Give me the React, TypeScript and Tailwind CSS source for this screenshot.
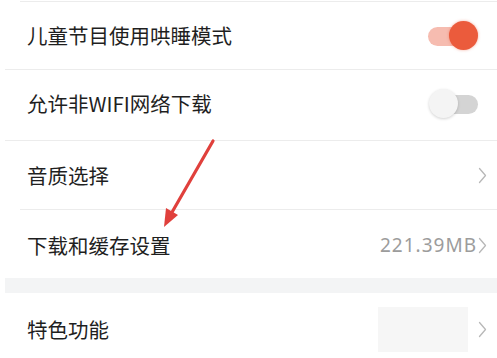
import { ReactNode } from 'react';

const FONT = { fontFamily: '"Noto Sans CJK SC", "Noto Sans", sans-serif' };

function Chevron() {
  return (
    <svg width="9" height="17" viewBox="0 0 9 17" className="shrink-0">
      <path d="M1.5 1.5 L7.5 8.5 L1.5 15.5" fill="none" stroke="#b8b8b8" strokeWidth="1.3" strokeLinecap="round" strokeLinejoin="round" />
    </svg>
  );
}

function Row({ label, right, className = '' }: { label: string; right?: ReactNode; className?: string }) {
  return (
    <div className={`flex items-center justify-between pl-[27px] pr-[10px] ${className}`}>
      <span className="text-[20.5px] text-[#1f1f1f] leading-none">{label}</span>
      {right}
    </div>
  );
}

function SwitchOn() {
  return (
    <div className="relative w-[50px] h-[30px] mr-[9px]">
      <div className="absolute left-0 top-[6px] w-[42px] h-[19px] rounded-full bg-[#f6bcb0]" />
      <div className="absolute right-0 top-0 w-[29px] h-[29px] rounded-full bg-[#eb5b3c] shadow-[0_0_3px_rgba(235,91,60,0.5)]" />
    </div>
  );
}

function SwitchOff() {
  return (
    <div className="relative w-[49px] h-[30px] mr-[9px]">
      <div className="absolute right-0 top-[6px] w-[40px] h-[19px] rounded-full bg-[#d4d4d4]" />
      <div className="absolute left-0 top-0 w-[29px] h-[29px] rounded-full bg-[#f4f4f4] shadow-[0_1px_3px_rgba(0,0,0,0.18)]" />
    </div>
  );
}

function Divider({ inset = 'ml-[5px]' }: { inset?: string }) {
  return <div className={`h-px bg-[#ececec] ${inset}`} />;
}

export default function App() {
  return (
    <div className="relative w-[497px] h-[358px] overflow-hidden bg-white" style={FONT}>
      <div className="h-px" />
      <Divider inset="ml-[20px]" />
      <Row label="儿童节目使用哄睡模式" className="h-[67px]" right={<SwitchOn />} />
      <Divider />
      <Row label="允许非WIFI网络下载" className="h-[70px] pb-[3px]" right={<SwitchOff />} />
      <Divider />
      <Row label="音质选择" className="h-[68px]" right={<Chevron />} />
      <Divider inset="ml-[20px]" />
      <Row
        label="下载和缓存设置"
        className="h-[68px] pt-[3px]"
        right={
          <div className="flex items-center gap-[1px]">
            <span className="text-[19px] tracking-[1px] text-[#9c9c9c] leading-none" style={{ fontFamily: '"Noto Sans", sans-serif' }}>
              221.39MB
            </span>
            <Chevron />
          </div>
        }
      />
      <div className="h-[15px] ml-[5px] bg-[#f3f4f5]" />
      <Row
        label="特色功能"
        className="h-[72px]"
        right={
          <div className="flex items-center gap-[10px]">
            <div className="w-[90px] h-[45px] bg-[#f6f6f6]" />
            <Chevron />
          </div>
        }
      />

      {/* red annotation arrow */}
      <svg className="absolute left-0 top-0 pointer-events-none" width="497" height="358">
        <line x1="213" y1="141" x2="171" y2="214" stroke="#e0403c" strokeWidth="3.2" strokeLinecap="round" />
        <polygon points="164,227 166,208 178,215" fill="#e0403c" />
      </svg>
    </div>
  );
}
